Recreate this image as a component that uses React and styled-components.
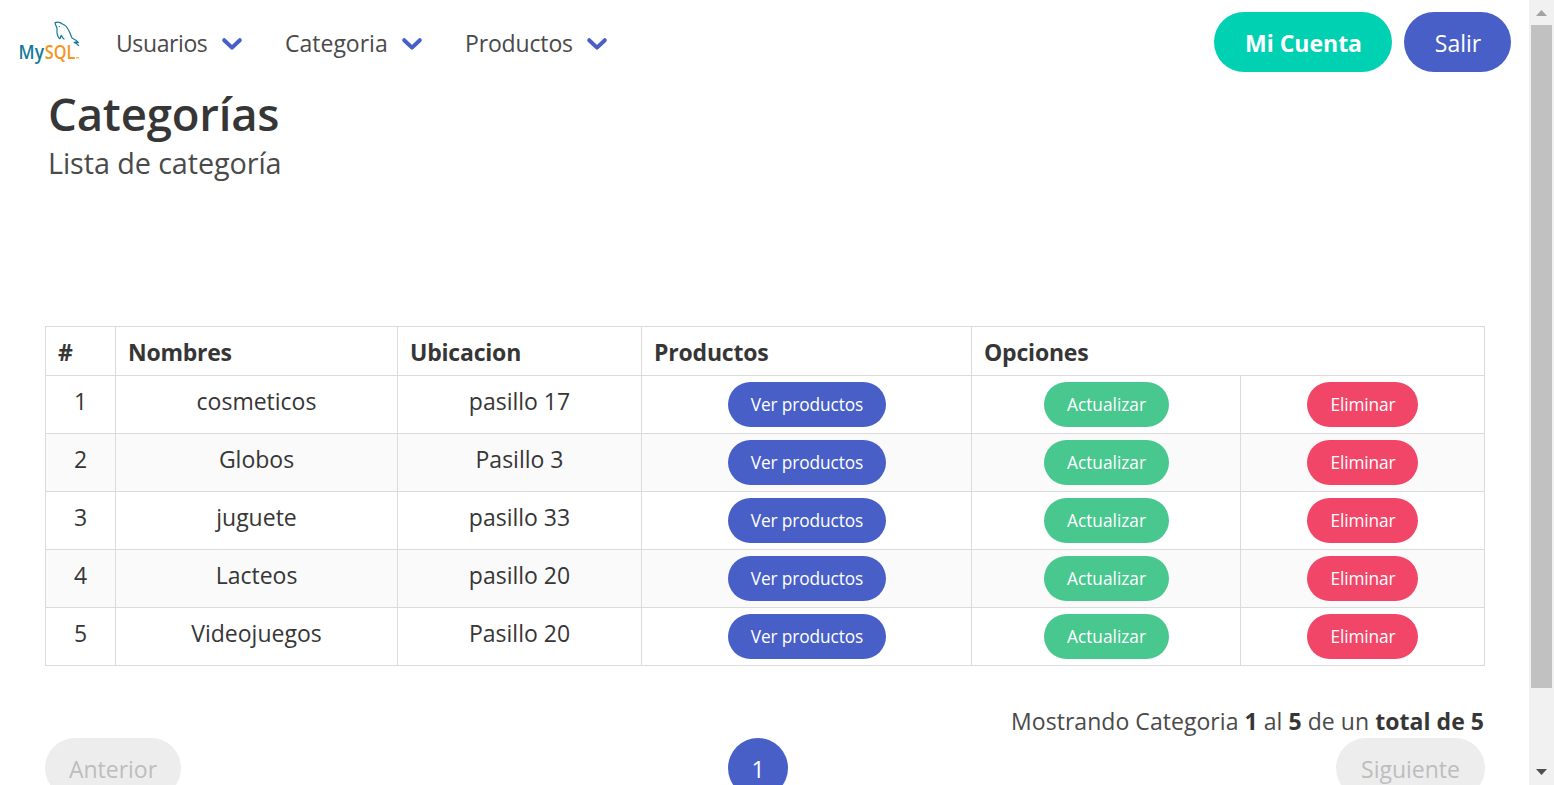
import React from "react";
import styled, { createGlobalStyle } from "styled-components";

const GlobalStyle = createGlobalStyle`
  * { box-sizing: border-box; }
  html, body { margin: 0; padding: 0; background: #fff; overflow: hidden; }
  body {
    font-family: "Open Sans", "Noto Sans", sans-serif;
    font-size: 23px;
    font-weight: 370;
    line-height: 36px;
    color: #4a4a4a;
  }
`;

const Window = styled.div`
  display: grid;
  grid-template-columns: minmax(0, 1fr) 25px;
  width: 1554px;
  height: 785px;
  overflow: hidden;
`;

const Page = styled.div`
  height: 785px;
  overflow: hidden;
`;

const Navbar = styled.nav`
  display: flex;
  align-items: center;
  height: 84px;
  padding: 0 18px;
`;

const Logo = styled.svg`
  display: block;
  width: 80px;
  height: 55px;
  margin: 0 26px 0 -8px;
`;

const NavLink = styled.a`
  display: flex;
  align-items: center;
  width: ${(p) => p.$width}px;
  padding-top: 2px;
  color: #4a4a4a;
`;

const Chevron = styled.svg`
  display: block;
  width: 22px;
  height: 14px;
  margin: 2px 0 1px auto;
`;

const NavGap = styled.div`
  width: 42px;
`;

const NavActions = styled.div`
  display: flex;
  gap: 12px;
  margin-left: auto;
`;

const Label = styled.span`
  white-space: pre;
  letter-spacing: ${(p) => p.$ls || 0}px;
  margin-right: ${(p) => -(p.$ls || 0)}px;
`;

const tones = {
  primary: "#00d1b2",
  link: "#485fc7",
  success: "#48c78e",
  danger: "#f14668",
};

const Button = styled.button`
  display: flex;
  align-items: center;
  justify-content: center;
  width: ${(p) => p.$width}px;
  height: 60px;
  padding: 2px 0 0 1px;
  border: 0;
  border-radius: 30px;
  background: ${(p) => tones[p.$tone]};
  color: #fff;
  font: inherit;
  font-weight: ${(p) => (p.$bold ? 700 : 370)};
`;

const SmallButton = styled(Button)`
  height: 45px;
  padding: 1px 0 0 1px;
  margin: 0 auto;
  font-size: 17.3px;
  line-height: 24px;
`;

const Heading = styled.header`
  padding: 4px 48px 0;
  height: 242px;
`;

const Title = styled.h1`
  margin: 0;
  font-size: 45.5px;
  line-height: 50px;
  font-weight: 600;
  color: #363636;
`;

const Subtitle = styled.h2`
  margin: 6px 0 0;
  font-size: 28.8px;
  line-height: 38px;
  font-weight: 370;
  color: #4a4a4a;
`;

const Table = styled.table`
  width: 1440px;
  margin-left: 45px;
  border-collapse: collapse;
  table-layout: fixed;
  color: #363636;
`;

const HeadCell = styled.th`
  height: 49px;
  padding: 1px 12px 0;
  border: 1px solid #dbdbdb;
  text-align: left;
  font-weight: 700;
  line-height: 36px;
`;

const Row = styled.tr`
  background: ${(p) => (p.$striped ? "#fafafa" : "#fff")};
`;

const Cell = styled.td`
  height: 58px;
  padding: ${(p) => (p.$action ? "6px 0" : "7px 0 0")};
  border: 1px solid #dbdbdb;
  text-align: center;
  vertical-align: top;
`;

const Summary = styled.p`
  margin: 38px 45px 0 0;
  text-align: right;
  line-height: 34px;

  strong { color: #363636; font-weight: 700; }
`;

const Pagination = styled.nav`
  display: grid;
  grid-template-columns: 136px 1fr 149px;
  width: 1440px;
  margin-left: 45px;
`;

const PageStep = styled.a`
  display: flex;
  align-items: center;
  justify-content: center;
  height: 60px;
  padding-top: 2px;
  border-radius: 30px;
  background: #ededed;
  color: #bdbdbd;
`;

const PageList = styled.div`
  display: flex;
  justify-content: center;
  padding-right: 2px;
`;

const Scrollbar = styled.aside`
  display: flex;
  flex-direction: column;
  align-items: center;
  height: 785px;
  background: #f1f1f1;
`;

const ScrollArrow = styled.svg`
  display: block;
  width: 25px;
  height: 25px;
`;

const Thumb = styled.div`
  width: 21px;
  height: 663px;
  margin-bottom: auto;
  background: #c1c1c1;
`;

function MySqlLogo() {
  return (
    <Logo viewBox="0 0 80 55" aria-label="MySQL">
      <g fill="none" stroke="#14799a" strokeWidth="1.2" strokeLinecap="round" strokeLinejoin="round">
        <path d="M45.2 7.6 C47.5 6.6 50.5 7.4 52.4 9 C55 9.6 58 13.3 60 18 C60.8 20 61.2 22.2 62.3 23.2 C64.6 24.2 67.2 25.7 68.4 27.6 C66.9 27.2 65.4 27 64.1 27.4 C66 28.2 67.7 29.4 68.6 30.6" />
        <path d="M45.2 7.6 C44.8 9.8 46.8 11.3 47 13.4 C47.3 15.6 46.4 17.3 47.4 19.6 C47.9 21.4 48.5 23.4 49.9 23.7 C50.7 23 50.4 21.2 51.3 20.4 C52.2 21.4 52.4 23 54 24.1" />
      </g>
      <circle cx="49.4" cy="11.6" r="0.6" fill="#14799a" />
      <text x="8.6" y="43.6" fontFamily="Open Sans, sans-serif" fontSize="19" fontWeight="600" fill="#14799a" textLength="25.5" lengthAdjust="spacingAndGlyphs">My</text>
      <text x="34.8" y="43.6" fontFamily="Open Sans, sans-serif" fontSize="19" fontWeight="600" fill="#f7941d" textLength="30.5" lengthAdjust="spacingAndGlyphs">SQL</text>
      <rect x="66" y="42" width="3" height="1.4" fill="#f9b768" />
    </Logo>
  );
}

function Arrow() {
  return (
    <Chevron viewBox="0 0 22 14">
      <path d="M3.2 3.2 L11 10.6 L18.8 3.2" fill="none" stroke="#485fc7" strokeWidth="4" strokeLinecap="round" strokeLinejoin="round" />
    </Chevron>
  );
}

const menu = [
  { name: "Usuarios", width: 127, spacing: -0.4 },
  { name: "Categoria", width: 138, spacing: 0 },
  { name: "Productos", width: 143, spacing: -0.15 },
];

const rows = [
  ["1", "cosmeticos", "pasillo 17"],
  ["2", "Globos", "Pasillo 3"],
  ["3", "juguete", "pasillo 33"],
  ["4", "Lacteos", "pasillo 20"],
  ["5", "Videojuegos", "Pasillo 20"],
];

const columns = [70, 282, 244, 330, 269, 244];

export default function App() {
  return (
    <Window>
      <GlobalStyle />
      <Page>
        <Navbar>
          <MySqlLogo />
          {menu.map((m, i) => (
            <React.Fragment key={m.name}>
              {i > 0 && <NavGap />}
              <NavLink $width={m.width}>
                <Label $ls={m.spacing}>{m.name}</Label>
                <Arrow />
              </NavLink>
            </React.Fragment>
          ))}
          <NavActions>
            <Button $tone="primary" $width={178} $bold><Label>Mi Cuenta</Label></Button>
            <Button $tone="link" $width={107}><Label>Salir</Label></Button>
          </NavActions>
        </Navbar>

        <Heading>
          <Title><Label $ls={-0.2}>Categorías</Label></Title>
          <Subtitle><Label $ls={-0.1}>Lista de categoría</Label></Subtitle>
        </Heading>

        <Table>
          <colgroup>
            {columns.map((w, i) => <col key={i} width={w} />)}
          </colgroup>
          <thead>
            <tr>
              <HeadCell>#</HeadCell>
              <HeadCell><Label $ls={-0.25}>Nombres</Label></HeadCell>
              <HeadCell><Label $ls={-0.2}>Ubicacion</Label></HeadCell>
              <HeadCell><Label $ls={-0.2}>Productos</Label></HeadCell>
              <HeadCell colSpan={2}><Label $ls={-0.2}>Opciones</Label></HeadCell>
            </tr>
          </thead>
          <tbody>
            {rows.map(([id, name, place], i) => (
              <Row key={id} $striped={i % 2 === 1}>
                <Cell>{id}</Cell>
                <Cell>{name}</Cell>
                <Cell>{place}</Cell>
                <Cell $action><SmallButton $tone="link" $width={158}><Label $ls={-0.1}>Ver productos</Label></SmallButton></Cell>
                <Cell $action><SmallButton $tone="success" $width={125}><Label>Actualizar</Label></SmallButton></Cell>
                <Cell $action><SmallButton $tone="danger" $width={111}><Label $ls={-0.1}>Eliminar</Label></SmallButton></Cell>
              </Row>
            ))}
          </tbody>
        </Table>

        <Summary>
          <Label $ls={0.05}>Mostrando Categoria <strong>1</strong> al <strong>5</strong> de un <strong>total de 5</strong></Label>
        </Summary>
        <Pagination>
          <PageStep><Label>Anterior</Label></PageStep>
          <PageList><Button $tone="link" $width={60}>1</Button></PageList>
          <PageStep><Label>Siguiente</Label></PageStep>
        </Pagination>
      </Page>

      <Scrollbar>
        <ScrollArrow viewBox="0 0 25 25"><path d="M7 16 L12.5 10 L18 16 Z" fill="#a3a3a3" /></ScrollArrow>
        <Thumb />
        <ScrollArrow viewBox="0 0 25 25"><path d="M7 9 L18 9 L12.5 15 Z" fill="#505050" /></ScrollArrow>
      </Scrollbar>
    </Window>
  );
}
